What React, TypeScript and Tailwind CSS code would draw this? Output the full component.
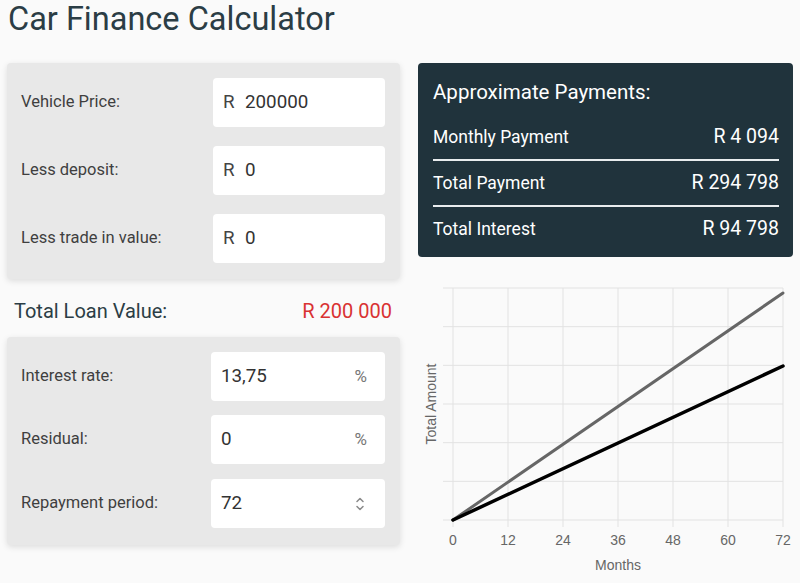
const money = [
  { label: 'Vehicle Price:', value: '200000' },
  { label: 'Less deposit:', value: '0' },
  { label: 'Less trade in value:', value: '0' },
];

const summary = [
  { label: 'Monthly Payment', value: 'R 4 094' },
  { label: 'Total Payment', value: 'R 294 798' },
  { label: 'Total Interest', value: 'R 94 798' },
];

function Chart() {
  const x0 = 40;
  const x1 = 370;
  const yTop = 18;
  const yBot = 250;
  const hLines = Array.from({ length: 7 }, (_, i) => yTop + ((yBot - yTop) / 6) * i);
  const ticks = [0, 12, 24, 36, 48, 60, 72];
  const font = "'Liberation Sans', Arial, sans-serif";
  return (
    <svg width="380" height="310" viewBox="0 0 380 310" className="block">
      {hLines.map(y => (
        <line key={y} x1={30} x2={x1} y1={y} y2={y} stroke="#e2e2e2" strokeWidth="1" />
      ))}
      {ticks.map((t, i) => {
        const x = x0 + 55 * i;
        return (
          <g key={t}>
            <line x1={x} x2={x} y1={yTop} y2={257} stroke="#e2e2e2" strokeWidth="1" />
            <text x={x} y={275} textAnchor="middle" fontSize="14" fill="#666" fontFamily={font}>
              {t}
            </text>
          </g>
        );
      })}
      <text x={x0 + 165} y={300} textAnchor="middle" fontSize="14" fill="#666" fontFamily={font}>
        Months
      </text>
      <text
        x={0}
        y={0}
        transform="translate(23 134) rotate(-90)"
        textAnchor="middle"
        fontSize="14"
        fill="#666"
        fontFamily={font}
      >
        Total Amount
      </text>
      <line x1={x0} y1={yBot} x2={x1} y2={23} stroke="#666" strokeWidth="3" strokeLinecap="round" />
      <line x1={x0} y1={yBot} x2={x1} y2={96} stroke="#000" strokeWidth="3.5" strokeLinecap="round" />
    </svg>
  );
}

function UpDown() {
  return (
    <svg width="8" height="14" viewBox="0 0 8 14" fill="none" stroke="#8a8a8a" strokeWidth="1.5" strokeLinecap="round" strokeLinejoin="round">
      <path d="M1 4.5 L4 1.5 L7 4.5" />
      <path d="M1 9.5 L4 12.5 L7 9.5" />
    </svg>
  );
}

export default function App() {
  return (
    <div className="w-[800px] h-[583px] bg-[#fafafa] overflow-hidden font-['Roboto',sans-serif]">
      <div className="h-[63px] pl-[8px]">
        <h1 className="text-[32.5px] leading-[38px] text-[#2b3d45] font-normal">Car Finance Calculator</h1>
      </div>

      <div className="flex gap-[18px] pl-[7px]">
        {/* Left column */}
        <div className="w-[393px] flex flex-col">
          <div className="bg-[#e8e8e8] rounded-[4px] shadow-[0_2px_6px_rgba(0,0,0,0.12)] pt-[15px] pb-[16px] pl-[14px] pr-[15px] flex flex-col gap-[19px]">
            {money.map(m => (
              <div key={m.label} className="flex items-center justify-between">
                <span className="text-[16.5px] text-[#3f3f3f]">{m.label}</span>
                <div className="w-[172px] h-[49px] bg-white rounded-[4px] flex items-center pl-[10px] text-[18.8px] text-[#333]">
                  <span className="w-[22px] text-[#444]">R</span>
                  <span>{m.value}</span>
                </div>
              </div>
            ))}
          </div>

          <div className="h-[58px] flex items-center justify-between pl-[7px] pr-[8px] pt-[6px]">
            <span className="text-[20px] text-[#2b3d45]">Total Loan Value:</span>
            <span className="text-[20px] text-[#d93232]">R 200 000</span>
          </div>

          <div className="bg-[#e8e8e8] rounded-[4px] shadow-[0_2px_6px_rgba(0,0,0,0.12)] pt-[15px] pb-[17px] pl-[14px] pr-[15px] flex flex-col gap-[14px]">
            <div className="flex items-center justify-between">
              <span className="text-[16.5px] text-[#3f3f3f]">Interest rate:</span>
              <div className="w-[174px] h-[49px] bg-white rounded-[4px] flex items-center justify-between pl-[10px] pr-[18px] text-[18.8px] text-[#333]">
                <span>13,75</span>
                <span className="text-[#777] text-[17px]">%</span>
              </div>
            </div>
            <div className="flex items-center justify-between">
              <span className="text-[16.5px] text-[#3f3f3f]">Residual:</span>
              <div className="w-[174px] h-[49px] bg-white rounded-[4px] flex items-center justify-between pl-[10px] pr-[18px] text-[18.8px] text-[#333]">
                <span>0</span>
                <span className="text-[#777] text-[17px]">%</span>
              </div>
            </div>
            <div className="flex items-center justify-between mt-[1px]">
              <span className="text-[16.5px] text-[#3f3f3f]">Repayment period:</span>
              <div className="w-[174px] h-[49px] bg-white rounded-[4px] flex items-center justify-between pl-[10px] pr-[21px] text-[18.8px] text-[#333]">
                <span>72</span>
                <UpDown />
              </div>
            </div>
          </div>
        </div>

        {/* Right column */}
        <div className="w-[375px] flex flex-col">
          <div className="bg-[#20333c] rounded-[4px] h-[194px] pl-[15px] pr-[14px] pt-[16px] text-white">
            <div className="text-[20.5px] leading-[26px]">Approximate Payments:</div>
            <div className="mt-[10px]">
              {summary.map((s, i) => (
                <div
                  key={s.label}
                  className={`flex items-center justify-between ${i < summary.length - 1 ? 'h-[46px] border-b-2 border-[#e8ecee]' : 'h-[44px]'}`}
                >
                  <span className="text-[17.5px]">{s.label}</span>
                  <span className="text-[19.5px]">{s.value}</span>
                </div>
              ))}
            </div>
          </div>
          <div className="mt-[13px] -ml-[5px]">
            <Chart />
          </div>
        </div>
      </div>
    </div>
  );
}
